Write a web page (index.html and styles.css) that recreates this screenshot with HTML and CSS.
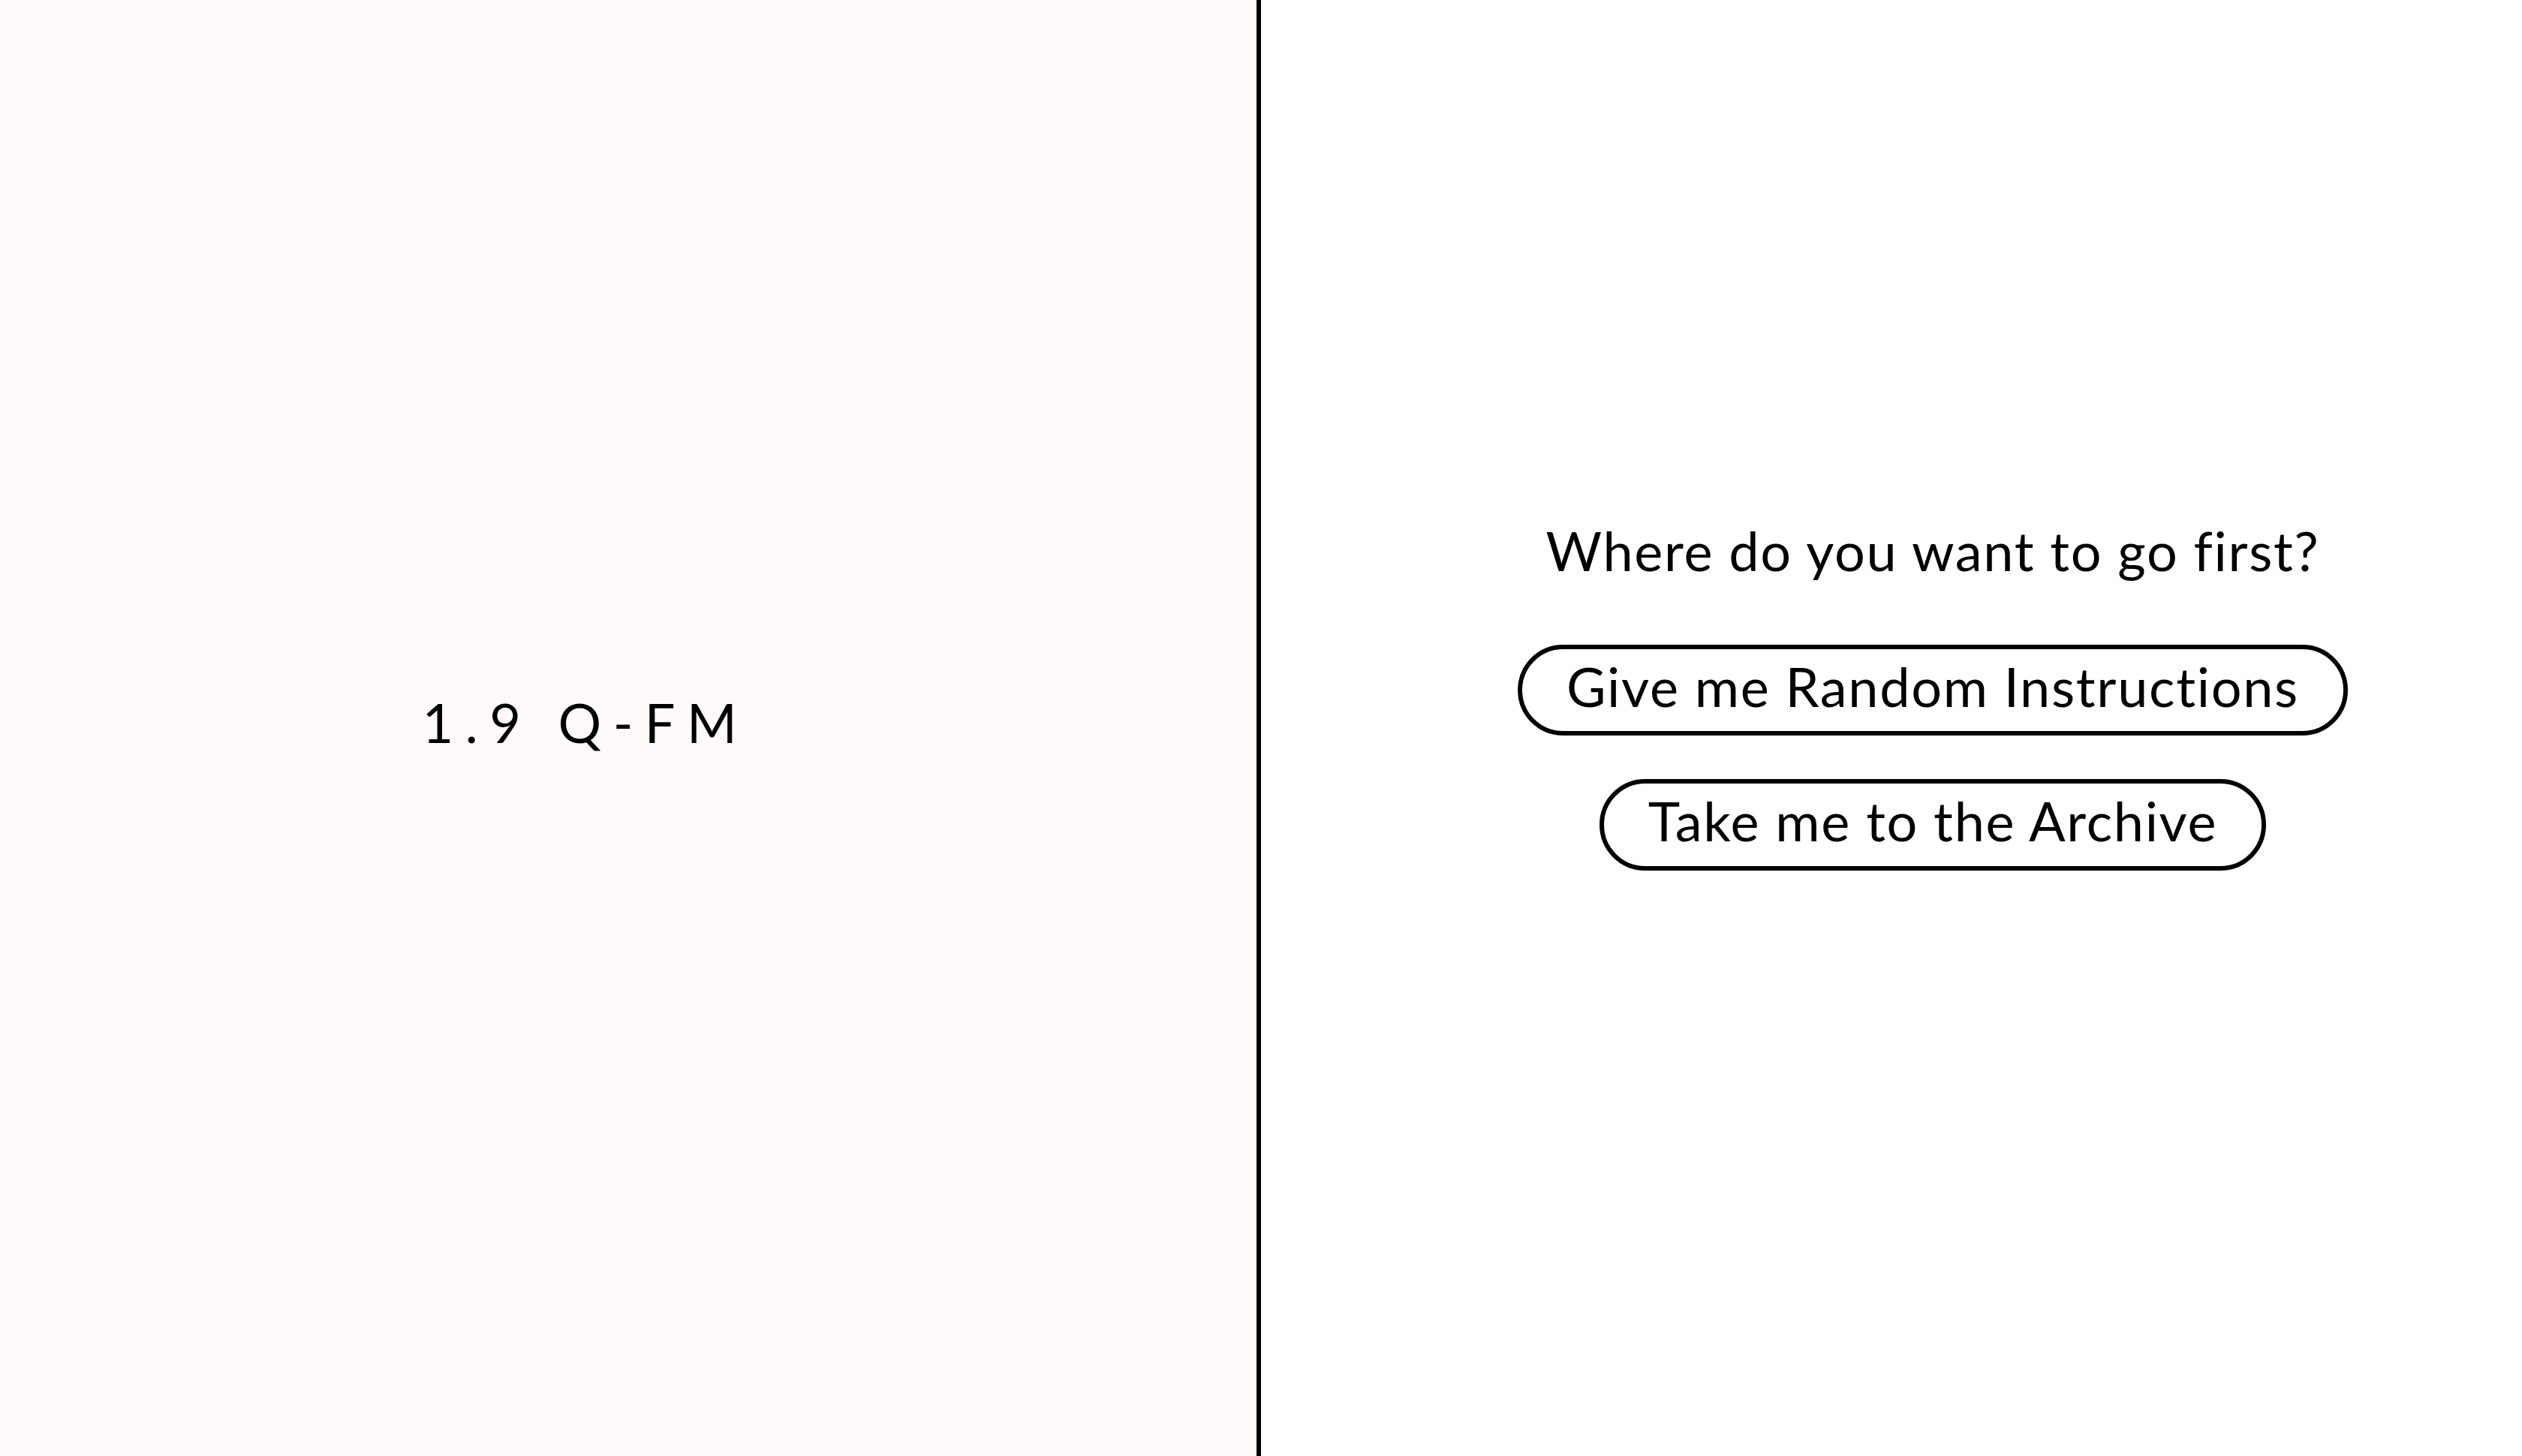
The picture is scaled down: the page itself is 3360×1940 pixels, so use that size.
FILE: index.html
```html
<!DOCTYPE html>
<html lang="en">
<head>
<meta charset="utf-8">
<title>1.9 Q-FM</title>
<link rel="stylesheet" href="styles.css">
</head>
<body>
<div class="page">
  <section class="left">
    <h1 class="logo">1.9 Q-FM</h1>
  </section>
  <section class="right">
    <div class="menu">
      <p class="question">Where do you want to go first?</p>
      <a class="pill" href="#">Give me Random Instructions</a>
      <a class="pill" href="#">Take me to the Archive</a>
    </div>
  </section>
</div>
</body>
</html>
```

FILE: styles.css
```css
html, body {
  margin: 0;
  padding: 0;
  background: #ffffff;
}
body {
  font-family: Lato, "Open Sans", sans-serif;
  color: #000;
}
.page {
  display: flex;
  height: 1940px;
  width: 3360px;
}
.left {
  width: 1560px;
  flex: none;
  background: #fffaf9;
  border-right: 6px solid #000;
  display: flex;
  align-items: center;
  justify-content: center;
  padding-right: 114px;
  padding-bottom: 16px;
  box-sizing: content-box;
  height: 1924px;
}
.logo {
  margin: 0;
  font-weight: 400;
  font-size: 72px;
  line-height: 1.2;
  letter-spacing: 15.5px;
}
.right {
  flex: 1;
  display: flex;
  align-items: center;
  justify-content: center;
  padding-left: 110px;
  padding-bottom: 90px;
}
.menu {
  display: flex;
  flex-direction: column;
  align-items: center;
}
.question {
  margin: 0 0 82px;
  font-size: 72px;
  line-height: 1.2;
  letter-spacing: 1.7px;
}
.pill {
  display: block;
  font-size: 72px;
  line-height: 1.2;
  letter-spacing: 1.7px;
  color: #000;
  text-decoration: none;
  border: 6px solid #000;
  border-radius: 70px;
  padding: 6px 59px 17px;
}
.pill + .pill {
  margin-top: 58px;
}
```
